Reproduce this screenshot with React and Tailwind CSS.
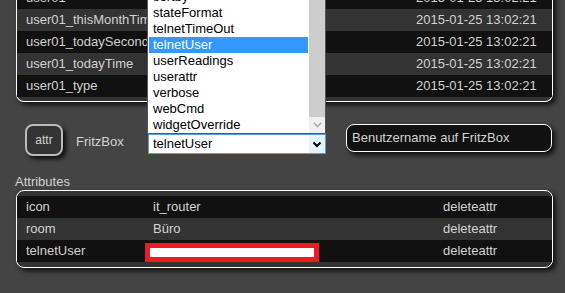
const readings = [
  { name: 'user01', time: '2015-01-25 13:02:21' },
  { name: 'user01_thisMonthTime', time: '2015-01-25 13:02:21' },
  { name: 'user01_todaySeconds', time: '2015-01-25 13:02:21' },
  { name: 'user01_todayTime', time: '2015-01-25 13:02:21' },
  { name: 'user01_type', time: '2015-01-25 13:02:21' },
];

const options = [
  'sortby',
  'stateFormat',
  'telnetTimeOut',
  'telnetUser',
  'userReadings',
  'userattr',
  'verbose',
  'webCmd',
  'widgetOverride',
];

const attrs = [
  { name: 'icon', value: 'it_router' },
  { name: 'room', value: 'Büro' },
  { name: 'telnetUser', value: null },
];

const App = () => {
  const selected = 'telnetUser';

  return (
    <div className="relative h-[293px] w-[565px] overflow-hidden bg-[#444] font-['Liberation_Sans',Arial,sans-serif] text-[13px] text-[#d2d2d2]">
      {/* Readings table (scrolled) */}
      <div className="ml-4 -mt-[13px] w-[537px] rounded-b-lg border-x border-b border-white bg-[#333] pb-[4px] shadow-[3px_3px_5px_rgba(0,0,0,0.75)]">
        {readings.map((r, i) => (
          <div
            key={r.name}
            className={`flex h-[22px] items-center ${i % 2 === 0 ? 'bg-[#111]' : 'bg-[#333]'}`}
          >
            <span className="w-[399px] pl-[9px]">{r.name}</span>
            <span>{r.time}</span>
          </div>
        ))}
      </div>

      {/* Open select list */}
      <div className="absolute left-[147px] top-[-12px] z-10 flex h-[146px] w-[179px] border border-[#555] bg-white text-black">
        <div className="flex-1 px-[1px]">
          {options.map((o) => (
            <div
              key={o}
              className={`h-[16px] pl-[4px] leading-[16px] ${o === selected ? 'bg-[#3399ff] text-white' : ''}`}
            >
              {o}
            </div>
          ))}
        </div>
        <div className="flex w-[16px] flex-col bg-[#cdcdcd]">
          <div className="flex-1" />
          <div className="flex h-[16px] items-center justify-center bg-[#f0f0f0]">
            <svg width="9" height="6" viewBox="0 0 9 6">
              <path d="M1 1 L4.5 4.5 L8 1" fill="none" stroke="#a3a3a3" strokeWidth="1.5" />
            </svg>
          </div>
        </div>
      </div>

      {/* Attribute edit row */}
      <div className="mt-[22px] flex items-start pl-[25px]">
        <button className="h-[32px] w-[38px] rounded-lg border-2 border-[#bbb] bg-[#333] text-[12px] text-[#d2d2d2] shadow-[3px_3px_4px_rgba(0,0,0,0.8)]">
          attr
        </button>
        <span className="ml-[13px] w-[72px] pt-[10px] leading-[16px]">FritzBox</span>
        <div className="mt-[10px] flex h-[20px] w-[178px] border border-[#5a9ee0] bg-white text-black">
          <span className="flex-1 pl-[4px] leading-[18px]">telnetUser</span>
          <span className="flex w-[16px] items-center justify-center bg-[#e5f1fb]">
            <svg width="10" height="7" viewBox="0 0 10 7">
              <path d="M1.5 1.5 L5 5 L8.5 1.5" fill="none" stroke="#000" strokeWidth="2" />
            </svg>
          </span>
        </div>
        <div className="ml-[20px] flex h-[28px] w-[206px] items-center rounded-lg border border-white bg-[#111] pl-[5px] shadow-[3px_3px_5px_rgba(0,0,0,0.8)]">
          Benutzername auf FritzBox
        </div>
      </div>

      <div className="ml-[15px] mt-[18px] leading-[16px]">Attributes</div>

      {/* Attributes table */}
      <div className="ml-4 w-[537px] rounded-lg border border-white bg-[#333] py-[5px] shadow-[3px_3px_5px_rgba(0,0,0,0.75)]">
        {attrs.map((a, i) => (
          <div
            key={a.name}
            className={`grid h-[22px] grid-cols-[128px_290px_1fr] items-center ${i % 2 === 0 ? 'bg-[#111]' : 'bg-[#333]'}`}
          >
            <span className="pl-[9px]">{a.name}</span>
            {a.value ? (
              <span className="pl-[8px]">{a.value}</span>
            ) : (
              <span className="mt-[3px] h-[19px] w-[174px] border-[5px] border-[#ed1c24] bg-white" />
            )}
            <span className="pl-[8px]">deleteattr</span>
          </div>
        ))}
      </div>
    </div>
  );
};

export default App;
